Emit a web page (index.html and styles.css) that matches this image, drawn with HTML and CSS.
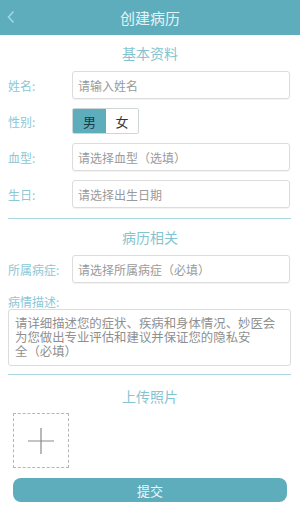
FILE: index.html
```html
<!DOCTYPE html>
<html lang="zh">
<head>
<meta charset="utf-8">
<link rel="stylesheet" href="styles.css">
</head>
<body>
<div class="app">
  <header class="topbar">
    <svg class="back" viewBox="0 0 10 14" width="10" height="14"><path d="M7.5 1.5 L2.5 7 L7.5 12.5" fill="none" stroke="#9fd6ea" stroke-width="1.6"/></svg>
    <div class="title">创建病历</div>
  </header>

  <div class="sec-title">基本资料</div>
  <div class="row">
    <div class="label">姓名:</div>
    <div class="input">请输入姓名</div>
  </div>
  <div class="row">
    <div class="label">性别:</div>
    <div class="seg">
      <div class="seg-item active">男</div>
      <div class="seg-item">女</div>
    </div>
  </div>
  <div class="row">
    <div class="label">血型:</div>
    <div class="input">请选择血型（选填）</div>
  </div>
  <div class="row">
    <div class="label">生日:</div>
    <div class="input">请选择出生日期</div>
  </div>
  <div class="divider"></div>

  <div class="sec-title">病历相关</div>
  <div class="row">
    <div class="label">所属病症:</div>
    <div class="input">请选择所属病症（必填）</div>
  </div>
  <div class="desc-label">病情描述:</div>
  <div class="textarea">
    <div class="ta-line">请详细描述您的症状、疾病和身体情况、妙医会</div>
    <div class="ta-line">为您做出专业评估和建议并保证您的隐私安</div>
    <div class="ta-line">全（必填）</div>
  </div>
  <div class="divider div2"></div>

  <div class="sec-title sec-upload">上传照片</div>
  <div class="upload">
    <svg viewBox="0 0 30 30" width="30" height="30"><path d="M15 2 V28 M2 15 H28" stroke="#8a8a8a" stroke-width="1.2"/></svg>
  </div>
  <button class="submit">提交</button>
</div>
</body>
</html>
```

FILE: styles.css
```css
* { box-sizing: border-box; }
html, body { margin: 0; padding: 0; background: #fff; }
body {
  font-family: "Noto Sans CJK SC", "Noto Sans", sans-serif;
  width: 300px;
  height: 511px;
  overflow: hidden;
}
.app { display: flex; flex-direction: column; }
.topbar {
  height: 35px;
  background: #5eadbd;
  display: flex;
  align-items: center;
  justify-content: center;
  position: relative;
}
.back { position: absolute; left: 6px; top: 10px; }
.title { color: #e6f3f6; font-size: 15px; line-height: 20px; }
.sec-title {
  height: 36px;
  line-height: 36px;
  text-align: center;
  color: #84c4d2;
  font-size: 14px;
}
.row {
  display: flex;
  align-items: center;
  padding: 0 10px 0 8px;
  margin-bottom: 9px;
}
.label {
  width: 64px;
  flex: none;
  font-size: 12px;
  color: #8cc7d5;
}
.input {
  flex: 1;
  height: 28px;
  border: 1px solid #dcdcdc;
  border-radius: 3px;
  padding-left: 5px;
  display: flex;
  align-items: center;
  font-size: 12px;
  color: #9a9a9a;
  box-shadow: 0 1px 1px rgba(0,0,0,0.05);
}
.seg {
  display: flex;
  height: 26px;
  border: 1px solid #cfd6d8;
  border-radius: 2px;
  overflow: hidden;
}
.seg-item {
  width: 32px;
  display: flex;
  align-items: center;
  justify-content: center;
  font-size: 13px;
  color: #333;
  background: #fff;
}
.seg-item.active { background: #5eadbd; color: #1f3a40; width: 33px; }
.divider {
  height: 1px;
  background: #a9d6df;
  margin: 1px 9px 0 8px;
}
.desc-label {
  font-size: 12px;
  color: #8cc7d5;
  padding: 3px 8px 0;
  height: 17px;
  line-height: 14px;
}
.textarea {
  margin: 0 9px 0 8px;
  height: 57px;
  border: 1px solid #dcdcdc;
  border-radius: 3px;
  padding: 6px 4px 0 6px;
  display: flex;
  flex-direction: column;
  overflow: hidden;
}
.ta-line {
  font-size: 12.4px;
  line-height: 14px;
  height: 14px;
  color: #8f8f8f;
  white-space: nowrap;
}
.div2 { margin-top: 8px; }
.sec-upload { height: 38px; line-height: 18px; padding-top: 12px; }
.upload {
  margin-left: 13px;
  width: 56px;
  height: 55px;
  border: 1px dashed #b5b5b5;
  display: flex;
  align-items: center;
  justify-content: center;
}
.submit {
  margin: 10px 13px 0;
  height: 24px;
  border: none;
  border-radius: 8px;
  background: #5eadbd;
  color: #eef7f9;
  font-family: inherit;
  font-size: 13px;
  padding: 0;
}
```
